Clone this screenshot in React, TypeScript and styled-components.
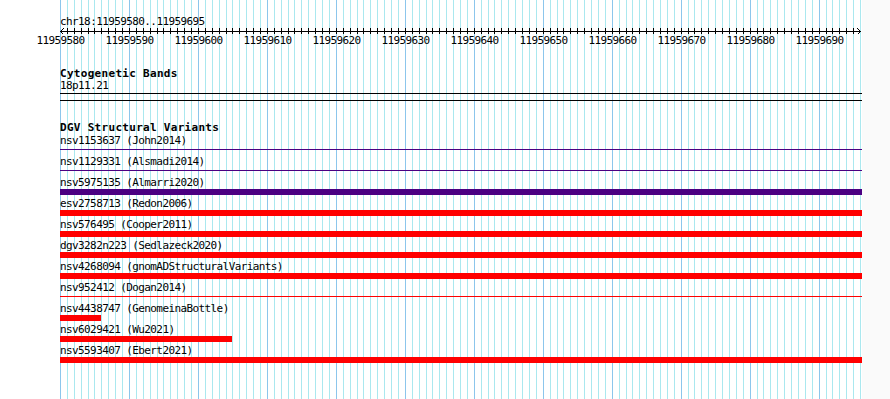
import React from 'react';
import styled, { createGlobalStyle } from 'styled-components';

const GlobalStyle = createGlobalStyle`
  html, body {
    margin: 0;
    padding: 0;
    background: #fafafa;
  }
  body {
    font-family: "DejaVu Sans Mono", "Liberation Mono", monospace;
    color: #000;
  }
`;

// window shown: chr18:11959580..11959695
const CHROM = 'chr18';
const START = 11959580;
const END = 11959695;
const BASES = END - START + 1;
const SCALE = 800 / BASES;

const bpToX = (k: number) => Math.round(k * SCALE);

type Variant = {
  name: string;
  source: string;
  color: string;
  thin?: boolean;
  from?: number; // bp offset from START
  to?: number;
};

const PURPLE = '#4b0082';
const RED = '#ff0000';

const variants: Variant[] = [
  { name: 'nsv1153637', source: 'John2014', color: PURPLE, thin: true },
  { name: 'nsv1129331', source: 'Alsmadi2014', color: PURPLE, thin: true },
  { name: 'nsv5975135', source: 'Almarri2020', color: PURPLE },
  { name: 'esv2758713', source: 'Redon2006', color: RED },
  { name: 'nsv576495', source: 'Cooper2011', color: RED },
  { name: 'dgv3282n223', source: 'Sedlazeck2020', color: RED },
  { name: 'nsv4268094', source: 'gnomADStructuralVariants', color: RED },
  { name: 'nsv952412', source: 'Dogan2014', color: RED, thin: true },
  { name: 'nsv4438747', source: 'GenomeinaBottle', color: RED, from: 0, to: 6 },
  { name: 'nsv6029421', source: 'Wu2021', color: RED, from: 0, to: 25 },
  { name: 'nsv5593407', source: 'Ebert2021', color: RED },
];

function Guidelines() {
  const lines = [];
  for (let k = 0; k <= BASES; k++) {
    const x = bpToX(k) + 0.5;
    lines.push(
      <line
        key={k}
        x1={x}
        x2={x}
        y1={0}
        y2="100%"
        stroke={k % 10 === 0 ? '#8cc6ec' : '#aae8ef'}
        strokeWidth={1}
      />
    );
  }
  return (
    <GuideSvg shapeRendering="crispEdges" aria-hidden>
      {lines}
    </GuideSvg>
  );
}

function Ruler() {
  const ticks = [];
  for (let k = 1; k < BASES; k++) {
    const x = bpToX(k) + 0.5;
    ticks.push(<line key={k} x1={x} x2={x} y1={0} y2={6} stroke="#000" />);
  }
  const labels = [];
  for (let k = 0; k < BASES; k += 10) {
    labels.push(
      <RulerLabel key={k} x={bpToX(k) + 0.5} y={16} textAnchor="middle">
        {START + k}
      </RulerLabel>
    );
  }
  return (
    <RulerSvg width={802} height={20} shapeRendering="crispEdges">
      <line x1={0} x2={801} y1={3.5} y2={3.5} stroke="#000" />
      {ticks}
      <polyline points="3.5,0.5 0.5,3.5 3.5,6.5" fill="none" stroke="#000" />
      <polyline points="797.5,0.5 800.5,3.5 797.5,6.5" fill="none" stroke="#000" />
      {labels}
    </RulerSvg>
  );
}

function VariantRow({ v }: { v: Variant }) {
  const partial = v.to !== undefined;
  const left = partial ? bpToX(v.from ?? 0) : 0;
  const width = partial ? bpToX(v.to!) - left : undefined;
  return (
    <Row>
      <ItemLabel>
        {v.name} ({v.source})
      </ItemLabel>
      <Lane>
        <Bar
          $color={v.color}
          $thin={v.thin}
          style={partial ? { marginLeft: left, width } : undefined}
        />
      </Lane>
    </Row>
  );
}

export default function App() {
  return (
    <>
      <GlobalStyle />
      <Page>
        <Gutter />
        <TrackColumn>
          <Guidelines />
          <Content>
            <Position>
              {CHROM}:{START}..{END}
            </Position>
            <Ruler />
            <TrackTitle $gap={19}>Cytogenetic Bands</TrackTitle>
            <ItemLabel>18p11.21</ItemLabel>
            <Band />
            <TrackTitle $gap={20}>DGV Structural Variants</TrackTitle>
            {variants.map((v) => (
              <VariantRow key={v.name} v={v} />
            ))}
          </Content>
        </TrackColumn>
        <RightSide />
      </Page>
    </>
  );
}

const Page = styled.div`
  display: flex;
  height: 100vh;
  overflow: hidden;
`;
const Gutter = styled.div`
  width: 60px;
  flex-shrink: 0;
  background: #fff;
`;
const TrackColumn = styled.div`
  position: relative;
  width: 802px;
  flex-shrink: 0;
  background: #fff;
`;
const RightSide = styled.div`
  flex: 1;
  background: #fafafa;
`;
const GuideSvg = styled.svg`
  position: absolute;
  top: 0;
  left: 0;
  width: 100%;
  height: 100%;
  z-index: 0;
`;
const Content = styled.div`
  position: relative;
  z-index: 1;
  padding-top: 16px;
  display: flex;
  flex-direction: column;
`;
const Position = styled.div`
  font-size: 11px;
  line-height: 12px;
  height: 12px;
  letter-spacing: -0.6px;
  white-space: nowrap;
`;
const RulerSvg = styled.svg`
  display: block;
  overflow: visible;
`;
const RulerLabel = styled.text`
  font-family: "DejaVu Sans Mono", "Liberation Mono", monospace;
  font-size: 11px;
  letter-spacing: -0.6px;
  fill: #000;
`;
const TrackTitle = styled.div<{ $gap: number }>`
  margin-top: ${({ $gap }) => $gap}px;
  font-size: 11px;
  font-weight: bold;
  line-height: 13px;
  height: 13px;
  letter-spacing: 0.3px;
  white-space: nowrap;
`;
const ItemLabel = styled.div`
  font-size: 11px;
  line-height: 12px;
  height: 12px;
  letter-spacing: -0.6px;
  white-space: nowrap;
`;
const Band = styled.div`
  margin-top: 1px;
  height: 6px;
  border-top: 1px solid #000;
  border-bottom: 1px solid #000;
`;
const Row = styled.div`
  display: flex;
  flex-direction: column;
  margin-bottom: 2px;

  ${ItemLabel} {
    line-height: 13px;
    height: 13px;
  }
`;
const Lane = styled.div`
  height: 6px;
  display: flex;
`;
const Bar = styled.div<{ $color: string; $thin?: boolean }>`
  width: 100%;
  height: ${({ $thin }) => ($thin ? '1px' : '6px')};
  margin-top: ${({ $thin }) => ($thin ? '2px' : '0')};
  background: ${({ $color }) => $color};
`;
